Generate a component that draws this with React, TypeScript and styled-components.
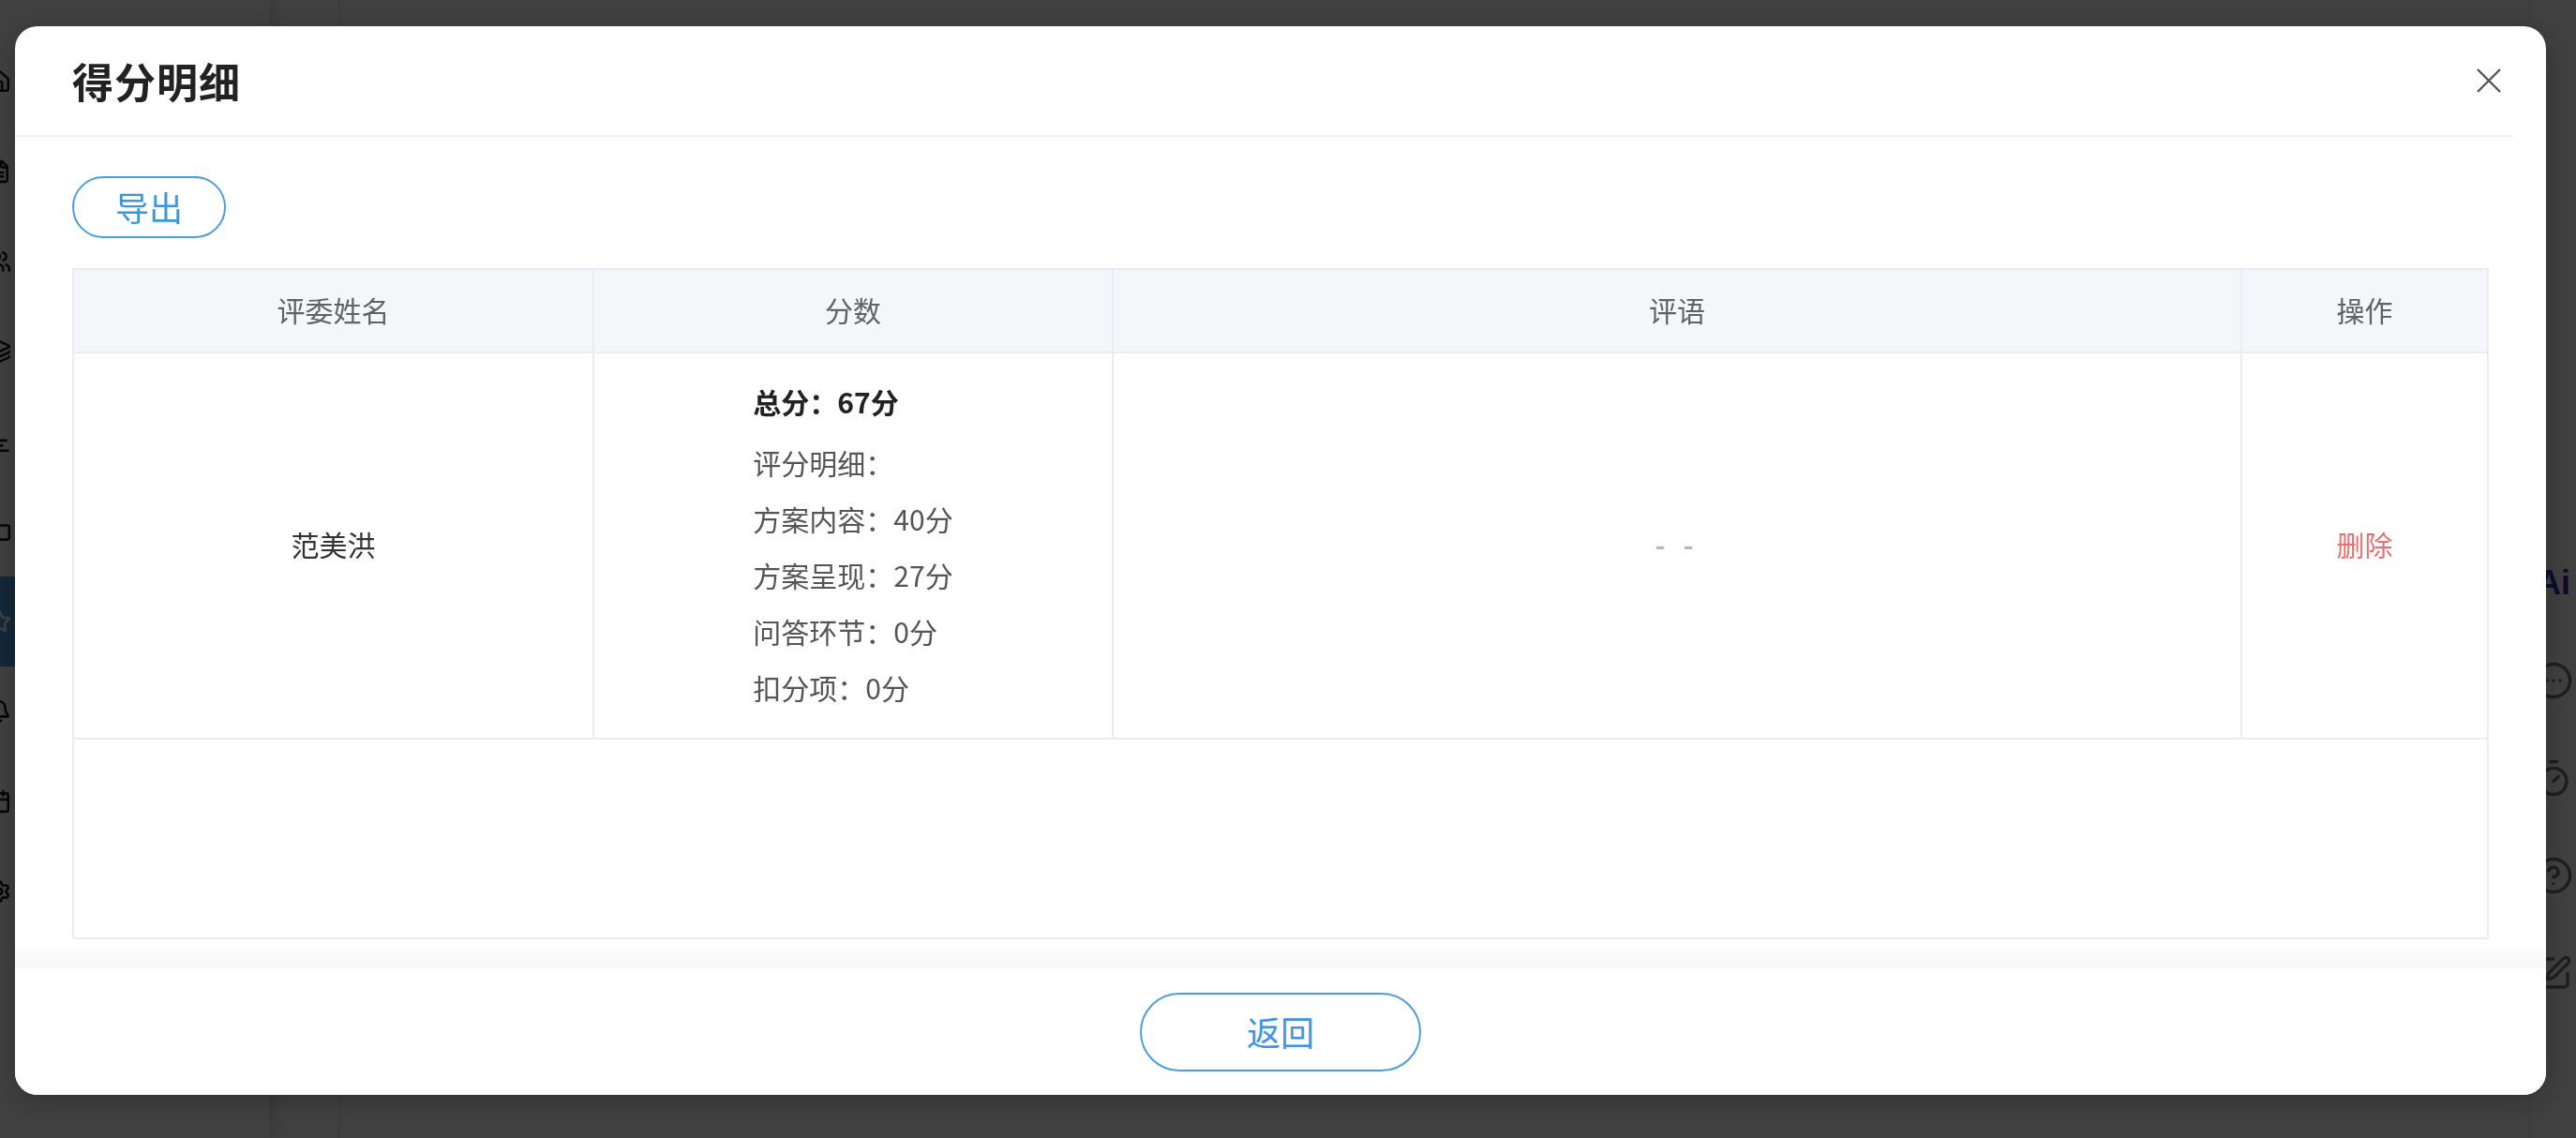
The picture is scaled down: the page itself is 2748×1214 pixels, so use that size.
import styled, { createGlobalStyle } from "styled-components";
import { MessageCircleMore, Timer, CircleHelp, SquarePen, House, FileText, Users, Settings, Layers, ChartBar, Bell, Folder, Calendar, Star } from "lucide-react";

const GlobalStyle = createGlobalStyle`
  html, body {
    margin: 0;
    padding: 0;
    width: 2748px;
    height: 1214px;
    overflow: hidden;
    background: #ffffff;
    font-family: "Noto Sans CJK SC", "Noto Sans", "Liberation Sans", sans-serif;
  }
  * { box-sizing: border-box; }
`;

// app behind the dialog (dimmed by the overlay)
const Shell = styled.div`
  display: grid;
  grid-template-columns: 287px 76px 1fr 50px;
  width: 2748px;
  height: 1214px;
  background: #ffffff;
`;

const Sidebar = styled.nav`
  display: flex;
  flex-direction: column;
  padding-top: 39px;
  background: #ffffff;
  box-shadow: 6px 0 14px rgba(0, 0, 0, 0.12);
`;

const SideItem = styled.div<{ $active?: boolean }>`
  height: 96px;
  display: flex;
  align-items: center;
  color: ${(p) => (p.$active ? "#ffffff" : "#1b1b1b")};
  background: ${(p) => (p.$active ? "#4f9fe6" : "transparent")};
  svg {
    margin-left: -14px;
  }
`;

const Gutter = styled.div`
  border-right: 2px solid #f0f0f0;
`;

const MainArea = styled.div`
  background: #ffffff;
`;

const Tools = styled.aside`
  display: flex;
  flex-direction: column;
  align-items: center;
  padding-top: 570px;
  border-left: 2px solid #f2f2f2;
`;

const ToolItem = styled.div`
  height: 104px;
  display: flex;
  align-items: center;
  justify-content: center;
  color: #777777;
`;

const AiMark = styled.span`
  font-family: "Liberation Sans", sans-serif;
  font-size: 36px;
  font-weight: 700;
  color: #3b2bbf;
`;

// dialog layer
const Overlay = styled.div`
  position: fixed;
  inset: 0;
  background: rgba(0, 0, 0, 0.75);
  padding: 28px 32px 46px 16px;
  display: flex;
`;

const Modal = styled.div`
  flex: 1;
  display: flex;
  flex-direction: column;
  background: #ffffff;
  border-radius: 24px;
  overflow: hidden;
  box-shadow: 0 6px 30px rgba(0, 0, 0, 0.25);
`;

const Header = styled.header`
  height: 118px;
  margin-right: 35px;
  padding: 0 11px 0 61px;
  display: flex;
  align-items: center;
  justify-content: space-between;
  border-bottom: 2px solid #eef0f4;
`;

const Title = styled.h2`
  margin: 0;
  font-size: 44px;
  font-weight: 600;
  color: #222222;
  letter-spacing: 1px;
`;

const CloseBtn = styled.button`
  width: 30px;
  height: 30px;
  padding: 0;
  border: none;
  background: none;
  display: flex;
  align-items: center;
  justify-content: center;
  cursor: pointer;
`;

const Body = styled.div`
  flex: 1;
  padding: 42px 61px 0;
  display: flex;
  flex-direction: column;
`;

const OutlineButton = styled.button<{ $w: number; $h: number; $fs: number }>`
  width: ${(p) => p.$w}px;
  height: ${(p) => p.$h}px;
  border: 2px solid #4a9fe3;
  border-radius: ${(p) => p.$h / 2}px;
  background: #ffffff;
  color: #3d97e0;
  font-family: inherit;
  font-size: ${(p) => p.$fs}px;
  padding: 0 0 2px;
  cursor: pointer;
`;

const TableWrap = styled.div`
  margin-top: 32px;
  height: 716px;
  border: 2px solid #e9edf3;
  display: flex;
  flex-direction: column;
`;

const Row = styled.div<{ $head?: boolean }>`
  display: grid;
  grid-template-columns: 555px 554px 1204px 1fr;
  background: ${(p) => (p.$head ? "#f5f6fa" : "#ffffff")};
  border-bottom: 2px solid #e9edf3;
  min-height: ${(p) => (p.$head ? "89px" : "auto")};
`;

const Cell = styled.div<{ $head?: boolean; $last?: boolean }>`
  display: flex;
  align-items: center;
  justify-content: center;
  padding-bottom: 4px;
  border-right: ${(p) => (p.$last ? "none" : "2px solid #e9edf3")};
  font-size: 30px;
  color: ${(p) => (p.$head ? "#606266" : "#333333")};
`;

const ScoreCell = styled(Cell)`
  padding: 21px 0 24px;
`;

const ScoreBlock = styled.div`
  display: inline-block;
  text-align: left;
`;

const ScoreLine = styled.div<{ $strong?: boolean }>`
  font-size: 30px;
  line-height: 60px;
  color: ${(p) => (p.$strong ? "#222222" : "#555555")};
  font-weight: ${(p) => (p.$strong ? 700 : 400)};
  margin-bottom: ${(p) => (p.$strong ? "5px" : "0")};
`;

const Placeholder = styled.span`
  color: #b4b8c2;
  font-weight: 700;
  letter-spacing: 6px;
`;

const DangerLink = styled.span`
  color: #ea6f6f;
  cursor: pointer;
`;

const Footer = styled.footer`
  position: relative;
  margin-top: 31px;
  height: 135px;
  display: flex;
  align-items: center;
  justify-content: center;
  background: #ffffff;

  &::before {
    content: "";
    position: absolute;
    left: 0;
    right: 0;
    top: -30px;
    height: 30px;
    background: linear-gradient(to bottom, rgba(0, 0, 0, 0), rgba(0, 0, 0, 0.035));
  }
`;

const sideIcons = [House, FileText, Users, Layers, ChartBar, Folder, Star, Bell, Calendar, Settings];

const details = [
  { label: "方案内容", score: 40 },
  { label: "方案呈现", score: 27 },
  { label: "问答环节", score: 0 },
  { label: "扣分项", score: 0 },
];

function App() {
  return (
    <>
      <GlobalStyle />
      <Shell>
        <Sidebar>
          {sideIcons.map((Icon, i) => (
            <SideItem key={i} $active={i === 6}>
              <Icon size={26} strokeWidth={2.4} />
            </SideItem>
          ))}
        </Sidebar>
        <Gutter />
        <MainArea />
        <Tools>
          <ToolItem>
            <AiMark>Ai</AiMark>
          </ToolItem>
          <ToolItem>
            <MessageCircleMore size={42} strokeWidth={2} />
          </ToolItem>
          <ToolItem>
            <Timer size={42} strokeWidth={2} />
          </ToolItem>
          <ToolItem>
            <CircleHelp size={42} strokeWidth={2} />
          </ToolItem>
          <ToolItem>
            <SquarePen size={40} strokeWidth={2} />
          </ToolItem>
        </Tools>
      </Shell>

      <Overlay>
        <Modal>
          <Header>
            <Title>得分明细</Title>
            <CloseBtn aria-label="关闭">
              <svg width="26" height="26" viewBox="0 0 26 26">
                <path d="M1 1 L25 25 M25 1 L1 25" stroke="#555555" strokeWidth="2.4" fill="none" />
              </svg>
            </CloseBtn>
          </Header>

          <Body>
            <div>
              <OutlineButton $w={164} $h={66} $fs={36}>导出</OutlineButton>
            </div>

            <TableWrap>
              <Row $head>
                <Cell $head>评委姓名</Cell>
                <Cell $head>分数</Cell>
                <Cell $head>评语</Cell>
                <Cell $head $last>操作</Cell>
              </Row>
              <Row>
                <Cell>范美洪</Cell>
                <ScoreCell>
                  <ScoreBlock>
                    <ScoreLine $strong>总分：67分</ScoreLine>
                    <ScoreLine>评分明细：</ScoreLine>
                    {details.map((d) => (
                      <ScoreLine key={d.label}>
                        {d.label}：{d.score}分
                      </ScoreLine>
                    ))}
                  </ScoreBlock>
                </ScoreCell>
                <Cell>
                  <Placeholder>- -</Placeholder>
                </Cell>
                <Cell $last>
                  <DangerLink>删除</DangerLink>
                </Cell>
              </Row>
            </TableWrap>
          </Body>

          <Footer>
            <OutlineButton $w={300} $h={84} $fs={36}>返回</OutlineButton>
          </Footer>
        </Modal>
      </Overlay>
    </>
  );
}

export default App;
